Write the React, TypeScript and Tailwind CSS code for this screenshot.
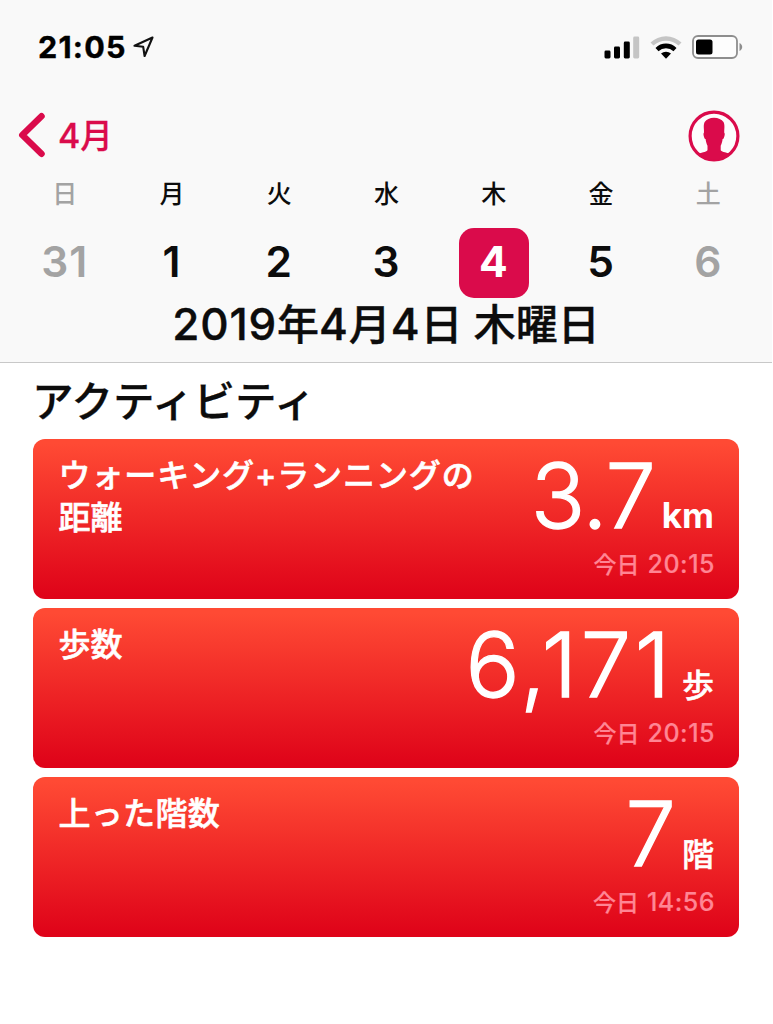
type Day = { label: string; date: number; muted?: boolean; selected?: boolean }

type Metric = {
    lines: string[]
    value: string
    unit: string
    time: string
    titleClass: string
    valueClass: string
    unitClass: string
}

const days: Day[] = [
    { label: '日', date: 31, muted: true },
    { label: '月', date: 1 },
    { label: '火', date: 2 },
    { label: '水', date: 3 },
    { label: '木', date: 4, selected: true },
    { label: '金', date: 5 },
    { label: '土', date: 6, muted: true },
]

const metrics: Metric[] = [
    {
        lines: ['ウォーキング+ランニングの', '距離'],
        value: '3.7',
        unit: 'km',
        time: '20:15',
        titleClass: 'tracking-[0.9px]',
        valueClass: '-mr-px tracking-[-1px]',
        unitClass: 'text-[35px] font-bold',
    },
    {
        lines: ['歩数'],
        value: '6,171',
        unit: '歩',
        time: '20:15',
        titleClass: '',
        valueClass: 'tracking-[3.7px]',
        unitClass: 'text-[32px] font-medium [-webkit-text-stroke:0.5px_white]',
    },
    {
        lines: ['上った階数'],
        value: '7',
        unit: '階',
        time: '14:56',
        titleClass: 'tracking-[0.3px]',
        valueClass: '-mr-[2px]',
        unitClass: 'text-[32px] font-medium [-webkit-text-stroke:0.5px_white]',
    },
]

function StatusBar() {
    return (
        <div className="flex h-[94px] items-center justify-between pl-[38px] pr-[29px]">
            <div className="flex items-center gap-[6px]">
                <span className="text-[30.5px] font-bold leading-none tracking-[1.2px] text-black [-webkit-text-stroke:0.4px]">21:05</span>
                <svg width="22" height="22" viewBox="0 0 22 22" fill="none" stroke="#111" strokeWidth="2.1" strokeLinejoin="round">
                    <path d="M19.5 1.5 1.5 9.7 10.2 10.8 11.6 20Z" />
                </svg>
            </div>
            <div className="flex items-center">
                <svg width="36" height="23" viewBox="0 0 36 23">
                    <rect x="0.5" y="14.5" width="6" height="8" rx="1.4" />
                    <rect x="10" y="10.5" width="6" height="12" rx="1.4" />
                    <rect x="19.8" y="5.5" width="6" height="17" rx="1.4" />
                    <rect x="29.2" y="0.5" width="6" height="22" rx="1.4" fill="#c5c5c5" />
                </svg>
                <svg className="ml-[10px]" width="32" height="23" viewBox="0 0 32 23">
                    <path d="M0.5 6.5A22.5 22.5 0 0 1 31.5 6.5L28.5 9.6A18.3 18.3 0 0 0 3.5 9.6Z" fill="#c5c5c5" />
                    <path d="M5.5 11.9A15 15 0 0 1 26.500 11.9L23.5 15.2A10.7 10.7 0 0 0 8.5 15.2Z" />
                    <path d="M11 17.6A7.4 7.4 0 0 1 21 17.6L16 22.7Z" />
                </svg>
                <svg className="ml-[10px]" width="51" height="24" viewBox="0 0 51 24">
                    <rect x="1" y="1" width="44" height="22" rx="5" fill="#fdfdfd" stroke="#8e8e8e" strokeWidth="1.8" />
                    <rect x="4" y="4.5" width="16.5" height="15" rx="2.5" />
                    <path d="M47.5 8v8c1.8-.8 2.7-2.3 2.7-4s-.9-3.2-2.7-4Z" fill="#8e8e8e" />
                </svg>
            </div>
        </div>
    )
}

function NavBar() {
    return (
        <div className="flex h-[84px] items-center justify-between pl-[18px] pr-[32px] text-[#da0b4b]">
            <div className="flex items-center gap-[13px]">
                <svg className="mb-[2px]" width="27" height="46" viewBox="0 0 27 46" fill="none" stroke="currentColor" strokeWidth="6.5" strokeLinecap="round" strokeLinejoin="round">
                    <path d="M23.5 4.2 4.3 23 23.5 41.8" />
                </svg>
                <span className="text-[32.5px] font-medium leading-none [-webkit-text-stroke:0.3px]">
                    <span className="text-[34px]">4</span>
                    月
                </span>
            </div>
            <svg width="52" height="52" viewBox="0 0 52 52">
                <circle cx="26" cy="26" r="23.9" fill="#fdfdfd" stroke="currentColor" strokeWidth="3.2" />
                <path
                    d="M26 7.7c-4.2 0-7.6 1.6-9.3 4.4-1.1 2-1 4.600-.8 7.300.1 1.500.1 2.600 0 3.700-.8.3-.4 2.400.3 4.300.4 1.100.8 1.600 1.400 1.700.3 2.700.9 4.700 1.900 6.600v4.200c0 1.600-4.600 2.400-9.200 3.600A23.500 23.500 0 0 0 41.900 43.500c-4.600-1.200-9.200-2-9.200-3.600v-4.200c1-1.900 1.600-3.900 1.900-6.600.6-.1 1-.6 1.400-1.700.7-1.900 1.100-4 .3-4.300-.1-1.100-.1-2.200 0-3.700.2-2.700.3-5.300-.8-7.300C33.800 9.300 30.200 7.700 26 7.700Z"
                    fill="currentColor"
                />
            </svg>
        </div>
    )
}

function WeekDay({ label, date, muted, selected }: Day) {
    return (
        <div className={`flex flex-col items-center ${muted ? 'text-[#a3a3a3]' : 'text-[#0c0c0c]'}`}>
            <span className="h-[50px] text-[25px] font-medium leading-[32px]">{label}</span>
            <span
                className={`flex h-[70px] w-[70px] items-center justify-center rounded-[15px] pb-[2px] text-[42.5px] tracking-[0.8px] ${
                    selected ? 'bg-[#da0b4b] font-bold text-white' : 'font-semibold'
                }`}
            >
                {date}
            </span>
        </div>
    )
}

function MetricCard({ lines, value, unit, time, titleClass, valueClass, unitClass }: Metric) {
    return (
        <article className="flex h-[160.5px] justify-between rounded-xl bg-[linear-gradient(180deg,#ff4a34_3%,#df0319_98%)] pl-[25.5px] pr-[25px] text-white">
            <h3 className="pt-4 text-[32px] font-medium leading-[42px] [-webkit-text-stroke:0.6px_white]">
                {lines.map((line, i) => (
                    <span key={line} className={`block whitespace-nowrap ${i === 0 ? titleClass : ''}`}>
                        {line}
                    </span>
                ))}
            </h3>
            <div className="flex flex-col items-end whitespace-nowrap pt-3">
                <p className="flex h-[94px] items-baseline gap-2 leading-[90px]">
                    <span className={`text-[90px] font-light [-webkit-text-stroke:1.3px_white] ${valueClass}`}>{value}</span>
                    <span className={unitClass}>{unit}</span>
                </p>
                <p className="text-[25px] font-medium leading-[38px] text-[#ff8594] [-webkit-text-stroke:0.2px]">
                    <span className="text-[23px]">今日</span>
                    <span className="-mr-px ml-2 tracking-[0.5px]">{time}</span>
                </p>
            </div>
        </article>
    )
}

// Digits run slightly larger than the kanji around them
function DateTitle({ text }: { text: string }) {
    return (
        <h1 className="-mt-px text-center text-[42px] font-medium leading-[54px] text-[#0c0c0c] [-webkit-text-stroke:0.4px]">
            {text.split(/(\d+)/).map((part, i) =>
                /\d/.test(part) ? (
                    <span key={i} className="text-[44px] tracking-[0.8px]">
                        {part}
                    </span>
                ) : (
                    part
                ),
            )}
        </h1>
    )
}

export default function App() {
    return (
        <div className="min-h-screen bg-white font-['Inter','Noto_Sans_CJK_JP',sans-serif]">
            <header className="h-[363px] w-[772px] border-b border-[#c8c8c8] bg-[#f9f9f9]">
                <StatusBar />
                <NavBar />
                <div className="ml-[11px] mr-[10px] grid grid-cols-7">
                    {days.map((day) => (
                        <WeekDay key={day.date} {...day} />
                    ))}
                </div>
                <DateTitle text="2019年4月4日 木曜日" />
            </header>
            <main className="pl-[33px] pr-[34px]">
                <h2 className="-ml-px h-[75.5px] pt-3 text-[41.5px] font-medium leading-[54px] text-[#0c0c0c] [-webkit-text-stroke:0.3px]">
                    アクティビティ
                </h2>
                <div className="flex flex-col gap-[8.5px]">
                    {metrics.map((metric) => (
                        <MetricCard key={metric.unit} {...metric} />
                    ))}
                </div>
            </main>
        </div>
    )
}
